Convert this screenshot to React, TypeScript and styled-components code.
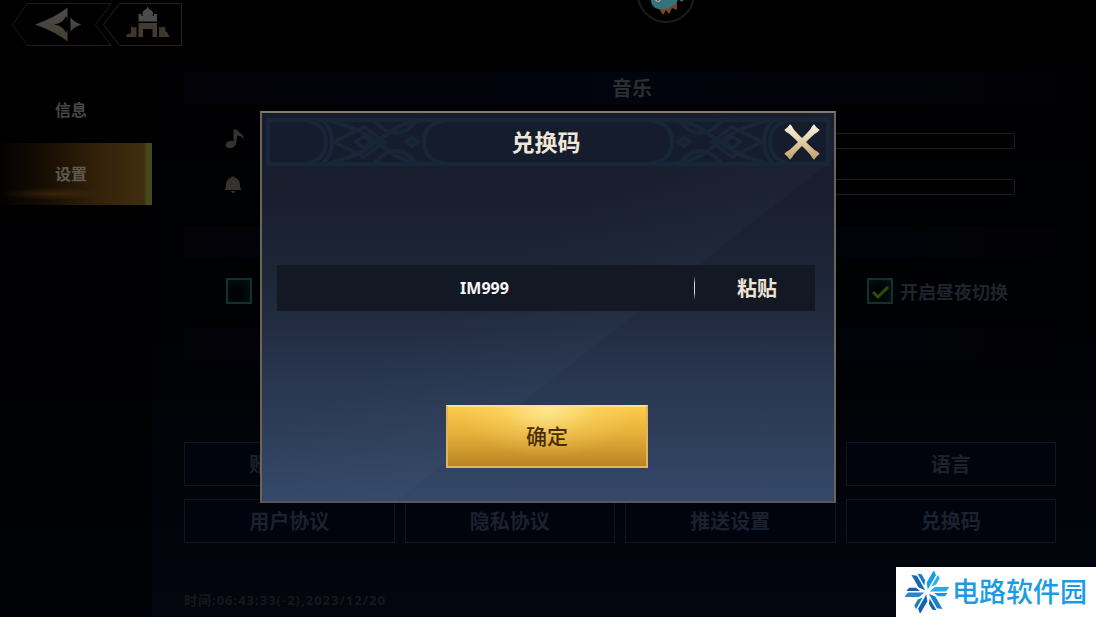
import React, { useState } from "react";
import styled, { createGlobalStyle } from "styled-components";

const GlobalStyle = createGlobalStyle`
  *, *::before, *::after { box-sizing: border-box; }
  body {
    margin: 0;
    background: #000002;
    font-family: "Noto Sans", "Noto Sans CJK SC", sans-serif;
    font-weight: 700;
  }
  button, input { font: inherit; color: inherit; }
  button { padding: 0; border: 0; background: none; cursor: pointer; }
`;

const Page = styled.div`
  min-height: 100vh;
  display: flex;
  flex-direction: column;
  background: linear-gradient(180deg, #000001 0%, #000103 50%, #03060f 100%);
`;

const TopBar = styled.header`
  height: 46px;
  padding: 2px 0 0 12px;
  display: flex;
`;

const NavButton = styled.button<{ $overlap?: boolean }>`
  height: 44px;
  margin-left: ${(p) => (p.$overlap ? "-9px" : "0")};
  svg { display: block; }
`;

const Avatar = styled.div`
  position: absolute;
  top: 0;
  left: calc(50% + 89px);
  svg { display: block; }
`;

const Body = styled.div`
  flex: 1;
  display: grid;
  grid-template-columns: 152px 1fr;
`;

const Sidebar = styled.nav`
  padding-top: 33px;
  display: flex;
  flex-direction: column;
  gap: 2px;
  background: rgba(0, 0, 1, 0.6);
`;

const Tab = styled.a<{ $active?: boolean }>`
  height: 62px;
  padding: 0 0 2px 55px;
  display: flex;
  align-items: center;
  font-size: 16px;
  color: ${(p) => (p.$active ? "#5f5a50" : "#47474a")};
  text-decoration: none;
  background: ${(p) =>
    p.$active
      ? `linear-gradient(90deg, transparent calc(100% - 8px), #47481c calc(100% - 5px)),
         radial-gradient(ellipse 50px 6px at 34% 82%, rgba(110, 76, 24, 0.35), transparent),
         linear-gradient(90deg, #040200 0%, #170d03 30%, #33220a 65%, #43300f 100%)`
      : "none"};
`;

const Main = styled.main`
  padding: 26px 40px 10px 32px;
  display: flex;
  flex-direction: column;
`;

const Band = styled.h2`
  height: 32px;
  margin: 0;
  padding: 0 0 2px 24px;
  display: flex;
  align-items: center;
  justify-content: center;
  font-size: 20px;
  color: #2d2e33;
  background: linear-gradient(90deg, #020207, #02040e 50%, #020205);
`;

const Sliders = styled.section`
  padding: 14px 41px 16px;
`;

const SliderRow = styled.div`
  height: 46px;
  display: grid;
  grid-template-columns: 20px 1fr;
  gap: 40px;
  align-items: center;
  svg { margin-bottom: 4px; }
`;

const Range = styled.input`
  appearance: none;
  width: 100%;
  height: 16px;
  margin: 0;
  border: 1px solid #1d1d1e;
  border-radius: 2px;
  background: #010102;
  &::-webkit-slider-thumb {
    appearance: none;
    width: 12px;
    height: 14px;
    background: #2b241a;
  }
`;

const Checks = styled.section`
  height: 69px;
  padding: 0 48px 4px 42px;
  display: flex;
  align-items: center;
  justify-content: space-between;
`;

const Check = styled.label`
  display: flex;
  align-items: center;
  gap: 7px;
  font-size: 18px;
  color: #20232e;
`;

const Box = styled.input`
  appearance: none;
  width: 26px;
  height: 26px;
  margin: 0;
  border: 2px solid #123030;
  background: radial-gradient(circle at 40% 60%, #010303 30%, #031414);
`;

const BoxWrap = styled.span`
  display: grid;
  > * { grid-area: 1 / 1; }
  svg { pointer-events: none; }
`;

const Options = styled.section`
  margin-top: 83px;
  display: grid;
  grid-template-columns: repeat(4, 1fr);
  gap: 13px 10px;
`;

const OptionButton = styled.button<{ $last?: boolean }>`
  height: 44px;
  padding-bottom: 2px;
  border: 1px solid #10161f;
  background: #01030d;
  color: #1b212d;
  font-size: 20px;
  grid-column: ${(p) => (p.$last ? "4" : "auto")};
`;

const Timestamp = styled.p`
  margin: 47px 0 0;
  font-size: 13px;
  line-height: 20px;
  letter-spacing: 1px;
  color: #16191a;
`;

const Overlay = styled.div`
  position: fixed;
  inset: 0;
  padding-bottom: 4px;
  display: flex;
  align-items: center;
  justify-content: center;
`;

const Dialog = styled.section`
  width: min(576px, 92vw);
  border: 2px solid #6b6459;
  border-top-color: #85796a;
  border-bottom-color: #57575b;
  background:
    linear-gradient(142deg, transparent 40%, rgba(110, 140, 180, 0.04) 59%, transparent 59%),
    linear-gradient(180deg, #171c2c 0%, #191e2f 20%, #1c2435 38%, #222d42 55%, #2b3a54 75%, #344868 100%);
`;

const DialogHeader = styled.header`
  height: 52px;
  margin: 3px 4px 0;
  display: grid;
  > * { grid-area: 1 / 1; }
`;

const Ornament = styled.svg`
  width: 100%;
  height: 52px;
`;

const DialogTitle = styled.h1`
  margin: 0;
  padding-right: 4px;
  display: flex;
  align-items: center;
  justify-content: center;
  font-size: 23px;
  line-height: 32px;
  color: #eee7d8;
`;

const CloseButton = styled.button`
  justify-self: end;
  align-self: center;
  width: 38px;
  height: 38px;
  margin-right: 9px;
  svg { display: block; }
`;

const Form = styled.form`
  padding: 97px 19px 33px 15px;
  display: flex;
  flex-direction: column;
  align-items: center;
  gap: 94px;
`;

const CodeRow = styled.div`
  width: 100%;
  height: 46px;
  display: grid;
  grid-template-columns: 1fr 1px 120px;
  align-items: center;
  background: #131825;
`;

const CodeInput = styled.input`
  width: 100%;
  height: 46px;
  padding: 0 2px 0 0;
  border: 0;
  outline: 0;
  background: none;
  text-align: center;
  font-size: 16px;
  color: #f6f6f6;
`;

const Divider = styled.span`
  height: 24px;
  background: linear-gradient(180deg, transparent, #d8d6d0 30%, #d8d6d0 70%, transparent);
`;

const PasteButton = styled.button`
  height: 46px;
  padding-left: 4px;
  font-size: 20px;
  color: #ebe4d5;
`;

const ConfirmButton = styled.button`
  width: 202px;
  height: 63px;
  margin-left: 2px;
  padding-bottom: 2px;
  border: 2px solid #dfb55c;
  border-top-color: #fbe08a;
  font-size: 21px;
  font-weight: 500;
  color: #4a2e08;
  background:
    radial-gradient(ellipse 45% 85% at 50% 0%, rgba(255, 240, 160, 0.85), rgba(255, 225, 120, 0.3) 55%, transparent),
    linear-gradient(180deg, #fccb4b 0%, #e6b03a 45%, #ba8426 100%);
`;

const Watermark = styled.a`
  position: fixed;
  right: 0;
  bottom: 0;
  width: 200px;
  height: 50px;
  padding: 0 9px;
  display: flex;
  align-items: center;
  gap: 2px;
  background: #ffffff;
  color: #1c9be2;
  font-size: 27px;
  font-weight: 500;
  line-height: 50px;
  white-space: nowrap;
  text-decoration: none;
  svg { flex: none; }
`;

const BackIcon = () => (
  <svg width="100" height="44" viewBox="12 2 100 44" fill="none">
    <defs>
      <linearGradient id="metal" x1="0" y1="0" x2="0" y2="1">
        <stop offset="0" stopColor="#4c4c50" />
        <stop offset="1" stopColor="#463b2c" />
      </linearGradient>
    </defs>
    <path d="M111 3.5H27.5L12.5 24.5 27.5 45.5H111L95.5 24.5Z" stroke="#211b12" />
    <path
      d="M35 24.500Q56 17 67.500 7.500V19.500L66 16Q63.500 23 54 24.500Q63.500 26 66 33L67.500 29.500V41.500Q56 32 35 24.500Z"
      fill="url(#metal)"
    />
    <path d="M70.500 17.500Q74 22 81.500 24.500Q74 27 70.500 31.500Z" fill="url(#metal)" />
  </svg>
);

const CastleIcon = () => (
  <svg width="80" height="44" viewBox="103 2 80 44" fill="none">
    <path d="M181.500 3.500H119.500L103.500 24.500 119.500 45.500H181.500Z" stroke="#2b2316" />
    <path
      d="M147.500 6.500l1.500 2.500c3 1 4.500 3 4 5.500l-.5 1.500h1.500v-2h3v7.500h-18.500V14h3v2h1.500l-.5-1.500c-.5-2.500 1-4.500 4-5.500z"
      fill="#4b4b4e"
    />
    <path d="M138.500 23H157V37h-4.500v-8h-9.500v8h-4.500z" fill="#443b30" />
    <path
      d="M131 26.500l3 1 2.500-1V37H126l1-3h2l2-1zM159 26.500l2 1 4-1 .5 5 2 1 .5 2 2 2.500H159z"
      fill="#40352a"
    />
  </svg>
);

const DinoAvatar = () => (
  <svg width="58" height="24" viewBox="0 0 58 24">
    <circle cx="29" cy="-6" r="28" fill="#000" stroke="#1b1c1d" strokeWidth="2" />
    <path d="M21 7l5 8 3-5 3 4 3-6 5 2V0z" fill="#7b4527" />
    <path d="M14 0c0 6 5 10 11 9 8 0 13-4 16-9z" fill="#35737a" />
    <path d="M43 0h4l-3 2z" fill="#35737a" />
    <circle cx="21" cy="-1" r="3" fill="#aaa" />
    <circle cx="21" cy="-1" r="1.500" fill="#300c10" />
  </svg>
);

const NoteIcon = () => (
  <svg width="20" height="20" viewBox="225 129 20 20" fill="#373230">
    <ellipse cx="230.500" cy="144.500" rx="5" ry="3.500" transform="rotate(-15 230.500 144.500)" />
    <path d="M233.500 129.500h3.500c1 3.500 7 4 7 10-2-3-4-4-7-4 0 4-.5 7-1.500 9.500h-2z" />
  </svg>
);

const BellIcon = () => (
  <svg width="18" height="20" viewBox="225 174 18 20" fill="#373230">
    <path d="M231.500 175.500h3v1c4 1 5.500 4 5.500 8 0 2 .7 3 2 4.500h-18c1.300-1.500 2-2.500 2-4.500 0-4 1.500-7 5.500-8z" />
    <path d="M231 190h4.500c-.5 2.500-4 2.500-4.500 0z" />
  </svg>
);

const BAR =
  "M-21 -4Q-18 -4.500 -15 -3.200Q-8 -2.600 0 -3Q8 -2.600 15 -3.200Q18 -4.500 21 -4Q20 0 21 4Q18 4.500 15 3.200Q8 2.600 0 3Q-8 2.600 -15 3.200Q-18 4.500 -21 4Q-20 0 -21 -4Z";

const CloseIcon = () => (
  <svg width="38" height="38" viewBox="-19 -19 38 38">
    <defs>
      <linearGradient id="gold" x1="0" y1="0" x2="0" y2="1">
        <stop offset="0" stopColor="#fbf6ea" />
        <stop offset="0.500" stopColor="#e0cda4" />
        <stop offset="1" stopColor="#bd9c62" />
      </linearGradient>
      <clipPath id="cross">
        <path d={BAR} transform="rotate(45)" />
        <path d={BAR} transform="rotate(-45)" />
      </clipPath>
    </defs>
    <rect x="-19" y="-19" width="38" height="38" fill="url(#gold)" clipPath="url(#cross)" />
  </svg>
);

const KnotPattern = () => (
  <g>
    <path d="M2 4H40Q60 8 60 26T40 48H2Z" />
    <path d="M56 4Q66 12 66 26T56 48" />
    <path d="M62 4Q90 12 102 20L124 36Q136 46 158 48M62 48Q90 40 102 32L124 16Q136 6 158 4" />
    <path d="M68 26L98 11 118 26 98 41ZM90 26L98 20 105 26 98 32Z" />
    <path d="M108 4Q118 17 130 17T150 4M108 48Q118 35 130 35T150 48" />
    <path d="M140 26L146 22 152 26 146 30Z" />
    <path d="M182 4Q158 6 158 26T182 48" />
  </g>
);

const HeaderOrnament = () => (
  <Ornament viewBox="0 0 564 52" fill="none" stroke="#182638" strokeWidth="4" aria-hidden="true">
    <rect x="0" y="2" width="564" height="48" fill="#151c2d" stroke="none" />
    <path d="M2 4H562V48H2Z" />
    <KnotPattern />
    <g transform="translate(564 0) scale(-1 1)">
      <KnotPattern />
    </g>
  </Ornament>
);

const LOGO_ARMS = [
  { angle: 0, a: "#2fa9e6", b: "#1c95dc" },
  { angle: 60, a: "#1b7fcb", b: "#1566b0" },
  { angle: 120, a: "#1566b0", b: "#1b7cc6" },
  { angle: 180, a: "#2387c8", b: "#1a5fa8" },
  { angle: 240, a: "#1768b2", b: "#1b7cc6" },
  { angle: 300, a: "#169fe4", b: "#2bb0ec" },
];

const LogoIcon = () => (
  <svg width="45" height="42" viewBox="-22 -21 45 42">
    {LOGO_ARMS.map((arm) => (
      <g key={arm.angle} transform={`rotate(${arm.angle})`}>
        <path d="M2.500 -0.600L8 -5H22.500L19 -0.600Z" fill={arm.a} />
        <path d="M7 0.900H20.500L18 4.200H11Z" fill={arm.b} />
      </g>
    ))}
  </svg>
);

export default function App() {
  const [code, setCode] = useState("IM999");

  const paste = async () => {
    const text = await navigator.clipboard.readText();
    setCode(text.trim());
  };

  return (
    <>
      <GlobalStyle />
      <Page>
        <TopBar>
          <NavButton aria-label="返回"><BackIcon /></NavButton>
          <NavButton $overlap aria-label="主城"><CastleIcon /></NavButton>
          <Avatar><DinoAvatar /></Avatar>
        </TopBar>
        <Body>
          <Sidebar>
            <Tab href="#info">信息</Tab>
            <Tab href="#settings" $active>设置</Tab>
          </Sidebar>
          <Main>
            <Band>音乐</Band>
            <Sliders>
              <SliderRow>
                <NoteIcon />
                <Range type="range" aria-label="音乐" defaultValue={40} />
              </SliderRow>
              <SliderRow>
                <BellIcon />
                <Range type="range" aria-label="音效" defaultValue={40} />
              </SliderRow>
            </Sliders>
            <Band />
            <Checks>
              <Check>
                <Box type="checkbox" aria-label="显示" />
              </Check>
              <Check>
                <BoxWrap>
                  <Box type="checkbox" defaultChecked />
                  <svg width="26" height="26" viewBox="0 0 26 26" fill="none">
                    <path d="M6 14L11 19 21 9" stroke="#27500f" strokeWidth="3" />
                  </svg>
                </BoxWrap>
                开启昼夜切换
              </Check>
            </Checks>
            <Band />
            <Options>
              <OptionButton>账号绑定</OptionButton>
              <OptionButton $last>语言</OptionButton>
              <OptionButton>用户协议</OptionButton>
              <OptionButton>隐私协议</OptionButton>
              <OptionButton>推送设置</OptionButton>
              <OptionButton>兑换码</OptionButton>
            </Options>
            <Timestamp>时间:06:43:33(-2),2023/12/20</Timestamp>
          </Main>
        </Body>
      </Page>
      <Overlay>
        <Dialog role="dialog" aria-labelledby="dialog-title">
          <DialogHeader>
            <HeaderOrnament />
            <DialogTitle id="dialog-title">兑换码</DialogTitle>
            <CloseButton aria-label="关闭"><CloseIcon /></CloseButton>
          </DialogHeader>
          <Form onSubmit={(e) => e.preventDefault()}>
            <CodeRow>
              <CodeInput
                aria-label="兑换码"
                value={code}
                onChange={(e) => setCode(e.target.value)}
              />
              <Divider />
              <PasteButton type="button" onClick={paste}>粘贴</PasteButton>
            </CodeRow>
            <ConfirmButton type="submit">确定</ConfirmButton>
          </Form>
        </Dialog>
      </Overlay>
      <Watermark href="#home">
        <LogoIcon />
        电路软件园
      </Watermark>
    </>
  );
}
